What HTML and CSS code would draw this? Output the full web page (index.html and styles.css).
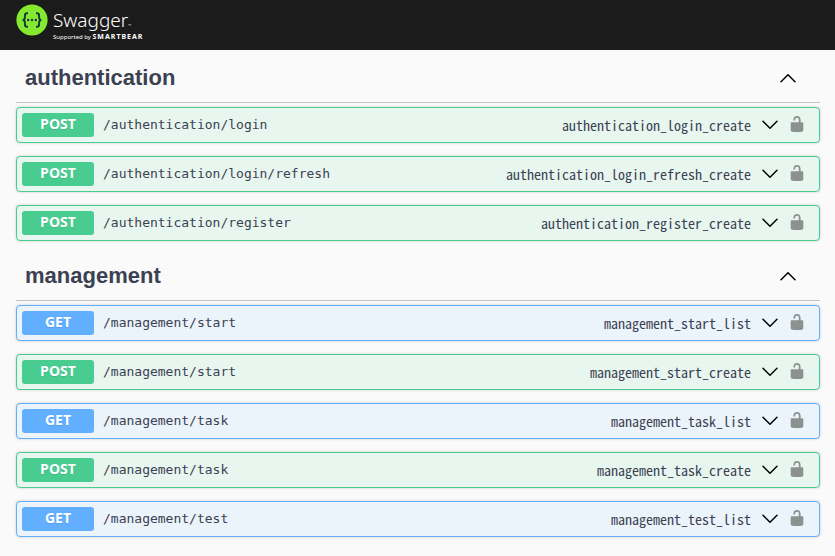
FILE: index.html
```
<!DOCTYPE html>
<html lang="en">
<head>
<meta charset="utf-8">
<title>Swagger UI</title>
<link rel="stylesheet" href="styles.css">
</head>
<body>
<svg class="sprite" aria-hidden="true">
  <symbol id="chevron" viewBox="0 0 16 10"><path d="M1 1.2 8 8.2 15 1.2" fill="none" stroke="currentColor" stroke-width="1.5" stroke-linecap="round" stroke-linejoin="round"/></symbol>
  <symbol id="lock" viewBox="0 0 20 20"><path d="M15.8 8H14V5.6C14 2.703 12.665 1 10 1 7.334 1 6 2.703 6 5.6V6h2v-.801C8 3.754 8.797 3 10 3c1.203 0 2 .754 2 2.199V8H4c-.553 0-1 .646-1 1.199V17c0 .549.428 1.139.951 1.307l1.197.387C5.672 18.861 6.55 19 7.1 19h5.8c.549 0 1.428-.139 1.951-.307l1.196-.387c.524-.167.953-.757.953-1.306V9.199C17 8.646 16.352 8 15.8 8z" fill="currentColor"/></symbol>
</svg>
<header class="topbar">
  <a class="logo" href="#" aria-label="Swagger, supported by SmartBear">
    <svg class="logo-mark" viewBox="0 0 32 32" aria-hidden="true">
      <circle cx="16" cy="16" r="15.6" fill="#85ea2d"/>
      <g fill="none" stroke="#173647" stroke-width="1.9">
        <path d="M12 9.2h-.8c-1.700 0-2.300.8-2.300 2.300v2c0 1.600-.6 2.500-2.300 2.500 1.700 0 2.300.9 2.300 2.500v2c0 1.500.6 2.300 2.300 2.300h.8"/>
        <path d="M20 9.200h.8c1.700 0 2.300.8 2.300 2.300v2c0 1.600.6 2.500 2.300 2.500-1.700 0-2.300.9-2.300 2.500v2c0 1.500-.6 2.300-2.300 2.300h-.8"/>
      </g>
      <g fill="#173647"><circle cx="12.200" cy="16" r="1.200"/><circle cx="16" cy="16" r="1.200"/><circle cx="19.800" cy="16" r="1.200"/></g>
    </svg>
    <span class="logo-words">
      <span class="logo-name">Swagger<small class="tm">™</small></span>
      <span class="logo-by">Supported by <b>SMARTBEAR</b></span>
    </span>
  </a>
</header>
<main class="wrapper">
  <section class="tag">
    <h2 class="tag-title"><button class="tag-button" aria-expanded="true">authentication<svg class="chevron up"><use href="#chevron"/></svg></button></h2>
    <div class="operations">
      <div class="op post"><button class="summary"><span class="method">POST</span><span class="path">/authentication/login</span><span class="op-id">authentication_login_create</span><svg class="chevron"><use href="#chevron"/></svg></button><button class="auth" aria-label="Authorize"><svg class="lock"><use href="#lock"/></svg></button></div>
      <div class="op post"><button class="summary"><span class="method">POST</span><span class="path">/authentication/login/refresh</span><span class="op-id">authentication_login_refresh_create</span><svg class="chevron"><use href="#chevron"/></svg></button><button class="auth" aria-label="Authorize"><svg class="lock"><use href="#lock"/></svg></button></div>
      <div class="op post"><button class="summary"><span class="method">POST</span><span class="path">/authentication/register</span><span class="op-id">authentication_register_create</span><svg class="chevron"><use href="#chevron"/></svg></button><button class="auth" aria-label="Authorize"><svg class="lock"><use href="#lock"/></svg></button></div>
    </div>
  </section>
  <section class="tag">
    <h2 class="tag-title"><button class="tag-button" aria-expanded="true">management<svg class="chevron up"><use href="#chevron"/></svg></button></h2>
    <div class="operations">
      <div class="op get"><button class="summary"><span class="method">GET</span><span class="path">/management/start</span><span class="op-id">management_start_list</span><svg class="chevron"><use href="#chevron"/></svg></button><button class="auth" aria-label="Authorize"><svg class="lock"><use href="#lock"/></svg></button></div>
      <div class="op post"><button class="summary"><span class="method">POST</span><span class="path">/management/start</span><span class="op-id">management_start_create</span><svg class="chevron"><use href="#chevron"/></svg></button><button class="auth" aria-label="Authorize"><svg class="lock"><use href="#lock"/></svg></button></div>
      <div class="op get"><button class="summary"><span class="method">GET</span><span class="path">/management/task</span><span class="op-id">management_task_list</span><svg class="chevron"><use href="#chevron"/></svg></button><button class="auth" aria-label="Authorize"><svg class="lock"><use href="#lock"/></svg></button></div>
      <div class="op post"><button class="summary"><span class="method">POST</span><span class="path">/management/task</span><span class="op-id">management_task_create</span><svg class="chevron"><use href="#chevron"/></svg></button><button class="auth" aria-label="Authorize"><svg class="lock"><use href="#lock"/></svg></button></div>
      <div class="op get"><button class="summary"><span class="method">GET</span><span class="path">/management/test</span><span class="op-id">management_test_list</span><svg class="chevron"><use href="#chevron"/></svg></button><button class="auth" aria-label="Authorize"><svg class="lock"><use href="#lock"/></svg></button></div>
    </div>
  </section>
</main>
</body>
</html>
```
FILE: styles.css
```
* { box-sizing: border-box; }
body { margin: 0; background: #fafafa; color: #3b4151; font-family: "Liberation Sans", sans-serif; }
button { margin: 0; padding: 0; border: 0; background: none; color: inherit; font: inherit; text-align: left; cursor: pointer; }
.sprite { display: none; }
.topbar { height: 50px; padding: 4px 16px; background: #1b1b1b; }
.logo { display: inline-flex; gap: 5px; color: #fff; text-decoration: none; font-family: "Noto Sans", sans-serif; }
.logo-mark { width: 32px; height: 32px; }
.logo-words { display: flex; flex-direction: column; padding-top: 3px; }
.logo-name { font-size: 19px; line-height: 26px; font-weight: 300; }
.tm { font-size: 4px; line-height: 4px; }
.logo-by { font-size: 6px; line-height: 8px; white-space: nowrap; }
.logo-by b { font-size: 7px; line-height: 7px; letter-spacing: 1px; }
.wrapper { padding: 2px 15px 0 16px; }
.tag-title { margin: 0 0 4px; border-bottom: 1px solid #c0c2c6; font-size: 22px; line-height: 30px; }
.tag-button { display: flex; align-items: center; justify-content: space-between; width: 100%; padding: 11px 24px 9px 9px; }
.chevron { flex: none; width: 16px; height: 10px; color: #000; }
.up { transform: rotate(180deg); }
.operations { display: grid; gap: 13px; padding-bottom: 9px; }
.op { display: flex; align-items: center; height: 36px; padding: 0 13px 0 5px; border: 1px solid; border-radius: 4px; box-shadow: 0 0 3px rgba(0, 0, 0, .19); }
.post { border-color: #49cc90; background: #e8f6f0; }
.get { border-color: #61affe; background: #ebf3fb; }
.summary { display: flex; flex: 1; align-items: center; min-width: 0; }
.method { width: 72px; padding-bottom: 2px; border-radius: 3px; color: #fff; font: 700 14px/22px "Open Sans", sans-serif; text-align: center; text-shadow: 0 1px 0 rgba(0, 0, 0, .1); }
.post .method { background: #49cc90; }
.get .method { background: #61affe; }
.path { flex: 1; padding-left: 9px; font: 13px/20px "DejaVu Sans Mono", monospace; }
.op-id { padding: 0 11px 1px 0; font: 14px/20px "Noto Sans Mono CJK JP", "DejaVu Sans Mono", monospace; }
.auth { display: flex; margin-left: 10px; padding-bottom: 3px; color: #8b918f; }
.lock { width: 18px; height: 18px; }
```
